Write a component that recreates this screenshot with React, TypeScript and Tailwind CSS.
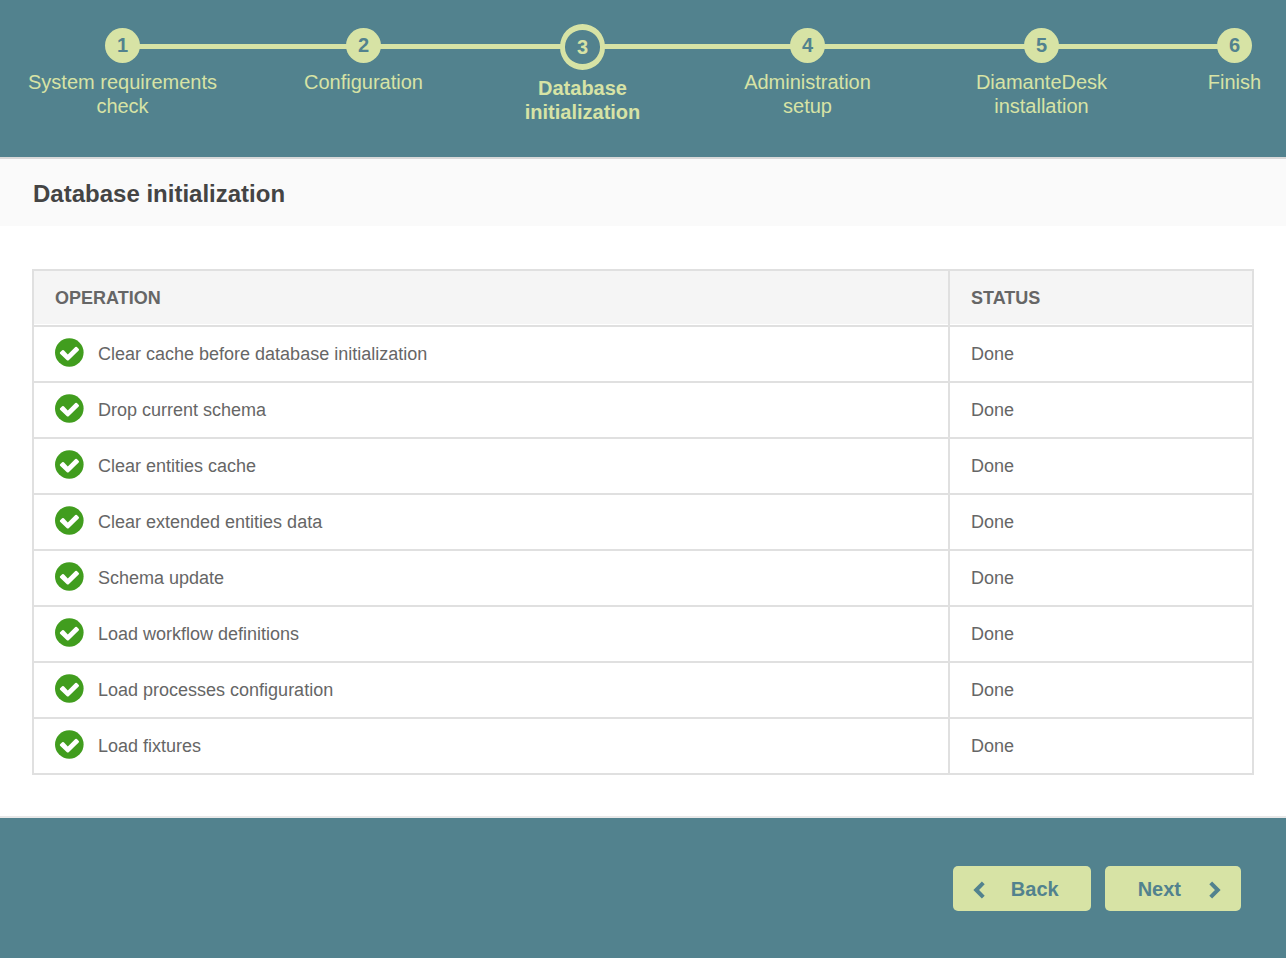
const steps = [
  { label: ["System requirements", "check"] },
  { label: ["Configuration"] },
  { label: ["Database", "initialization"], active: true },
  { label: ["Administration", "setup"] },
  { label: ["DiamanteDesk", "installation"] },
  { label: ["Finish"] },
];

const operations = [
  "Clear cache before database initialization",
  "Drop current schema",
  "Clear entities cache",
  "Clear extended entities data",
  "Schema update",
  "Load workflow definitions",
  "Load processes configuration",
  "Load fixtures",
];

function CheckIcon() {
  return (
    <svg className="mb-[3px] size-[29px] shrink-0" viewBox="0 0 29 29" aria-hidden="true">
      <circle cx="14.3" cy="14.5" r="14.3" fill="#419d1e" />
      <path
        d="M5.1 14.3 L7.2 12.2 Q8 11.6 8.8 12.3 L12.8 16.5 L20.3 9 Q21.1 8.3 21.9 9 L23.8 10.9 Q24.4 11.6 23.7 12.4 L13.7 22.2 Q12.8 22.9 11.9 22.2 L5.1 15.7 Q4.5 15 5.1 14.3 Z"
        fill="#fff"
      />
    </svg>
  );
}

function Chevron({ direction }: { direction: "left" | "right" }) {
  return (
    <svg className="mt-0.5 h-[18px] w-3" viewBox="0 0 12 18" aria-hidden="true">
      <path
        d={direction === "left" ? "M10.3 1.9 L3.2 9 L10.3 16.1" : "M1.7 1.9 L8.8 9 L1.7 16.1"}
        fill="none"
        stroke="#52828e"
        strokeWidth="4"
      />
    </svg>
  );
}

function Stepper() {
  return (
    <nav aria-label="Installation steps" className="relative h-[157px] bg-[#52828e] pt-6 pr-[26px] pl-7">
      <div className="absolute top-11 right-[52px] left-[123px] h-[5px] bg-[#d7e3a5]" />
      <ol className="relative grid grid-cols-[minmax(0,189fr)_minmax(0,121fr)_minmax(0,145fr)_minmax(0,133fr)_minmax(0,163fr)_minmax(0,51fr)] gap-x-[86px] text-xl leading-6 text-[#d7e3a5]">
        {steps.map((step, i) => (
          <li
            key={step.label[0]}
            aria-current={step.active ? "step" : undefined}
            className={step.active ? "flex flex-col items-center font-bold" : "flex flex-col items-center pt-1"}
          >
            <span
              className={
                step.active
                  ? "flex h-[46px] w-[45px] items-center justify-center rounded-full border-x-5 border-y-6 border-[#d7e3a5] bg-[#52828e]"
                  : "flex size-[35px] items-center justify-center rounded-full bg-[#d7e3a5] pb-0.5 font-bold text-[#52828e]"
              }
            >
              {i + 1}
            </span>
            <span className={step.active ? "mt-1.5 text-center whitespace-nowrap" : "mt-[7px] text-center whitespace-nowrap"}>
              {step.label.map((line) => (
                <span key={line} className="block">
                  {line}
                </span>
              ))}
            </span>
          </li>
        ))}
      </ol>
    </nav>
  );
}

export default function App() {
  return (
    <div className="flex min-h-screen flex-col bg-white font-['Liberation_Sans',Arial,sans-serif]">
      <Stepper />
      <header className="border-t-2 border-[#d9d9d9] bg-[#fafafa] px-[33px] pt-[19px] pb-4">
        <h1 className="text-2xl leading-8 font-bold text-[#444]">Database initialization</h1>
      </header>
      <main className="px-8 pt-[43px] pb-[41px]">
        <table className="w-full table-fixed border-collapse text-left text-lg leading-6 text-[#666]">
          <thead>
            <tr className="h-14 bg-[#f5f5f5] font-bold">
              <th scope="col" className="border-2 border-[#e0e0e0] px-[21px] shadow-[inset_0_-1px_0_#fff]">
                OPERATION
              </th>
              <th scope="col" className="w-[304px] border-2 border-[#e0e0e0] px-[21px] shadow-[inset_0_-1px_0_#fff]">
                STATUS
              </th>
            </tr>
          </thead>
          <tbody>
            {operations.map((operation) => (
              <tr key={operation} className="h-14">
                <td className="border-2 border-[#e0e0e0] px-[21px]">
                  <div className="flex items-center gap-3.5">
                    <CheckIcon />
                    {operation}
                  </div>
                </td>
                <td className="border-2 border-[#e0e0e0] px-[21px]">Done</td>
              </tr>
            ))}
          </tbody>
        </table>
      </main>
      <footer className="flex grow items-start justify-end gap-3.5 border-t-2 border-[#e8e8e8] bg-[#52828e] pt-12 pr-[45px] pb-[47px] text-xl leading-6 font-bold text-[#52828e]">
        <button type="button" className="flex h-[45px] items-center gap-[26px] rounded-[5px] bg-[#d7e3a5] pr-8 pl-5">
          <Chevron direction="left" />
          Back
        </button>
        <button type="button" className="flex h-[45px] items-center gap-7 rounded-[5px] bg-[#d7e3a5] pr-5 pl-[33px]">
          Next
          <Chevron direction="right" />
        </button>
      </footer>
    </div>
  );
}
